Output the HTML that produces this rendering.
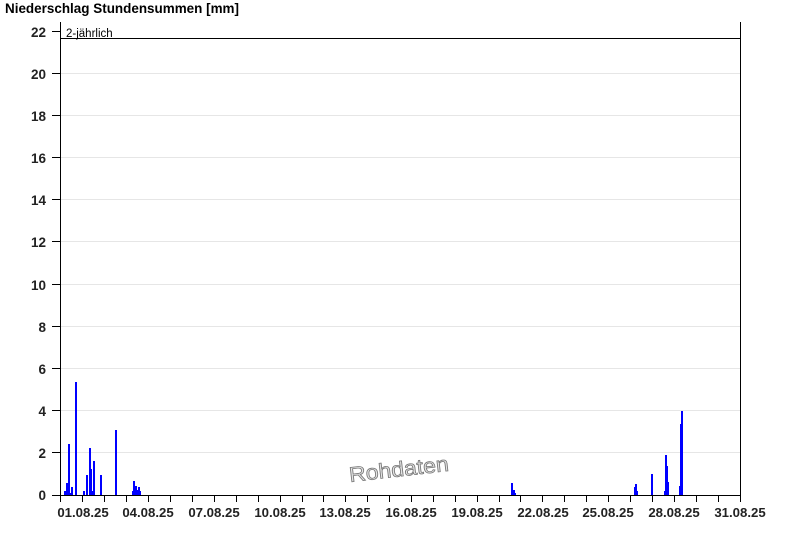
<!DOCTYPE html>
<html><head><meta charset="utf-8"><style>
html,body{margin:0;padding:0;background:#fff;}
svg{display:block;font-family:"Liberation Sans",Arial,sans-serif;}
</style></head><body>
<svg width="800" height="550" viewBox="0 0 800 550" xmlns="http://www.w3.org/2000/svg">
<rect width="800" height="550" fill="#fff"/>
<text x="5" y="13" font-size="13.5" font-weight="bold" fill="#000" textLength="234" lengthAdjust="spacingAndGlyphs">Niederschlag Stundensummen [mm]</text>
<g stroke="#e6e6e6" stroke-width="1">
<line x1="61" x2="740" y1="452.5" y2="452.5"/><line x1="61" x2="740" y1="410.5" y2="410.5"/>
<line x1="61" x2="740" y1="368.5" y2="368.5"/><line x1="61" x2="740" y1="326.5" y2="326.5"/>
<line x1="61" x2="740" y1="284.5" y2="284.5"/><line x1="61" x2="740" y1="241.5" y2="241.5"/>
<line x1="61" x2="740" y1="199.5" y2="199.5"/><line x1="61" x2="740" y1="157.5" y2="157.5"/>
<line x1="61" x2="740" y1="115.5" y2="115.5"/><line x1="61" x2="740" y1="73.5" y2="73.5"/>
</g>
<g font-size="13.5" font-weight="bold" fill="#222" text-anchor="end">
<text x="46" y="500">0</text><text x="46" y="458">2</text><text x="46" y="416">4</text>
<text x="46" y="374">6</text><text x="46" y="332">8</text><text x="46" y="290">10</text>
<text x="46" y="247">12</text><text x="46" y="205">14</text><text x="46" y="163">16</text>
<text x="46" y="121">18</text><text x="46" y="79">20</text><text x="46" y="37">22</text>
</g>
<g stroke="#000" stroke-width="1">
<line x1="52" x2="60" y1="495.5" y2="495.5"/><line x1="52" x2="60" y1="452.5" y2="452.5"/>
<line x1="52" x2="60" y1="410.5" y2="410.5"/><line x1="52" x2="60" y1="368.5" y2="368.5"/>
<line x1="52" x2="60" y1="326.5" y2="326.5"/><line x1="52" x2="60" y1="284.5" y2="284.5"/>
<line x1="52" x2="60" y1="241.5" y2="241.5"/><line x1="52" x2="60" y1="199.5" y2="199.5"/>
<line x1="52" x2="60" y1="157.5" y2="157.5"/><line x1="52" x2="60" y1="115.5" y2="115.5"/>
<line x1="52" x2="60" y1="73.5" y2="73.5"/><line x1="52" x2="60" y1="31.5" y2="31.5"/>
</g>
<text x="66" y="37" font-size="11.5" fill="#000">2-jährlich</text>
<line x1="60" x2="740" y1="38.5" y2="38.5" stroke="#000"/>
<g fill="#0000ff">
<rect x="64" y="491" width="2" height="4"/><rect x="66" y="483" width="2" height="12"/>
<rect x="68" y="444" width="2" height="51"/><rect x="70" y="493" width="1" height="2"/>
<rect x="71" y="487" width="2" height="8"/><rect x="75" y="382" width="2" height="113"/>
<rect x="83" y="491" width="2" height="4"/><rect x="86" y="475" width="2" height="20"/>
<rect x="89" y="448" width="2" height="47"/><rect x="90" y="469" width="2" height="26"/>
<rect x="92" y="491" width="1" height="4"/><rect x="93" y="461" width="2" height="34"/>
<rect x="100" y="475" width="2" height="20"/><rect x="115" y="430" width="2" height="65"/>
<rect x="132" y="491" width="2" height="4"/><rect x="133" y="481" width="2" height="14"/>
<rect x="135" y="486" width="2" height="9"/><rect x="137" y="490" width="1" height="5"/>
<rect x="138" y="487" width="2" height="8"/><rect x="140" y="491" width="1" height="4"/>
<rect x="511" y="483" width="2" height="12"/><rect x="513" y="490" width="2" height="5"/>
<rect x="515" y="493" width="1" height="2"/>
<rect x="634" y="487" width="1" height="8"/><rect x="635" y="484" width="2" height="11"/>
<rect x="637" y="491" width="1" height="4"/>
<rect x="651" y="474" width="2" height="21"/>
<rect x="664" y="491" width="1" height="4"/><rect x="665" y="455" width="2" height="40"/>
<rect x="667" y="466" width="1" height="29"/><rect x="668" y="482" width="1" height="13"/>
<rect x="679" y="486" width="2" height="9"/><rect x="680" y="424" width="1" height="71"/>
<rect x="681" y="411" width="2" height="84"/>
</g>
<text x="0" y="0" font-size="21" fill="#e4e4e4" stroke="#777" stroke-width="0.8" textLength="100" lengthAdjust="spacingAndGlyphs" transform="translate(350,482) rotate(-6.5)">Rohdaten</text>
<line x1="60.5" x2="60.5" y1="22" y2="496" stroke="#000"/>
<line x1="740.5" x2="740.5" y1="22" y2="496" stroke="#000"/>
<line x1="60" x2="741" y1="495.5" y2="495.5" stroke="#000"/>
<g stroke="#000">
<path d="M60.5 495v7M82.5 495v7M104.5 495v7M126.5 495v7M148.5 495v7M170.5 495v7M192.5 495v7M214.5 495v7M236.5 495v7M258.5 495v7M280.5 495v7M302.5 495v7M323.5 495v7M345.5 495v7M367.5 495v7M389.5 495v7M411.5 495v7M433.5 495v7M455.5 495v7M477.5 495v7M499.5 495v7M520.5 495v7M542.5 495v7M564.5 495v7M586.5 495v7M608.5 495v7M630.5 495v7M652.5 495v7M674.5 495v7M696.5 495v7M718.5 495v7M740.5 495v7"/>
</g>
<g font-size="13.2" font-weight="bold" fill="#222" text-anchor="middle">
<text x="83" y="517">01.08.25</text><text x="148" y="517">04.08.25</text>
<text x="214" y="517">07.08.25</text><text x="280" y="517">10.08.25</text>
<text x="345" y="517">13.08.25</text><text x="411" y="517">16.08.25</text>
<text x="477" y="517">19.08.25</text><text x="543" y="517">22.08.25</text>
<text x="608" y="517">25.08.25</text><text x="674" y="517">28.08.25</text>
<text x="740" y="517">31.08.25</text>
</g>
</svg>
</body></html>
